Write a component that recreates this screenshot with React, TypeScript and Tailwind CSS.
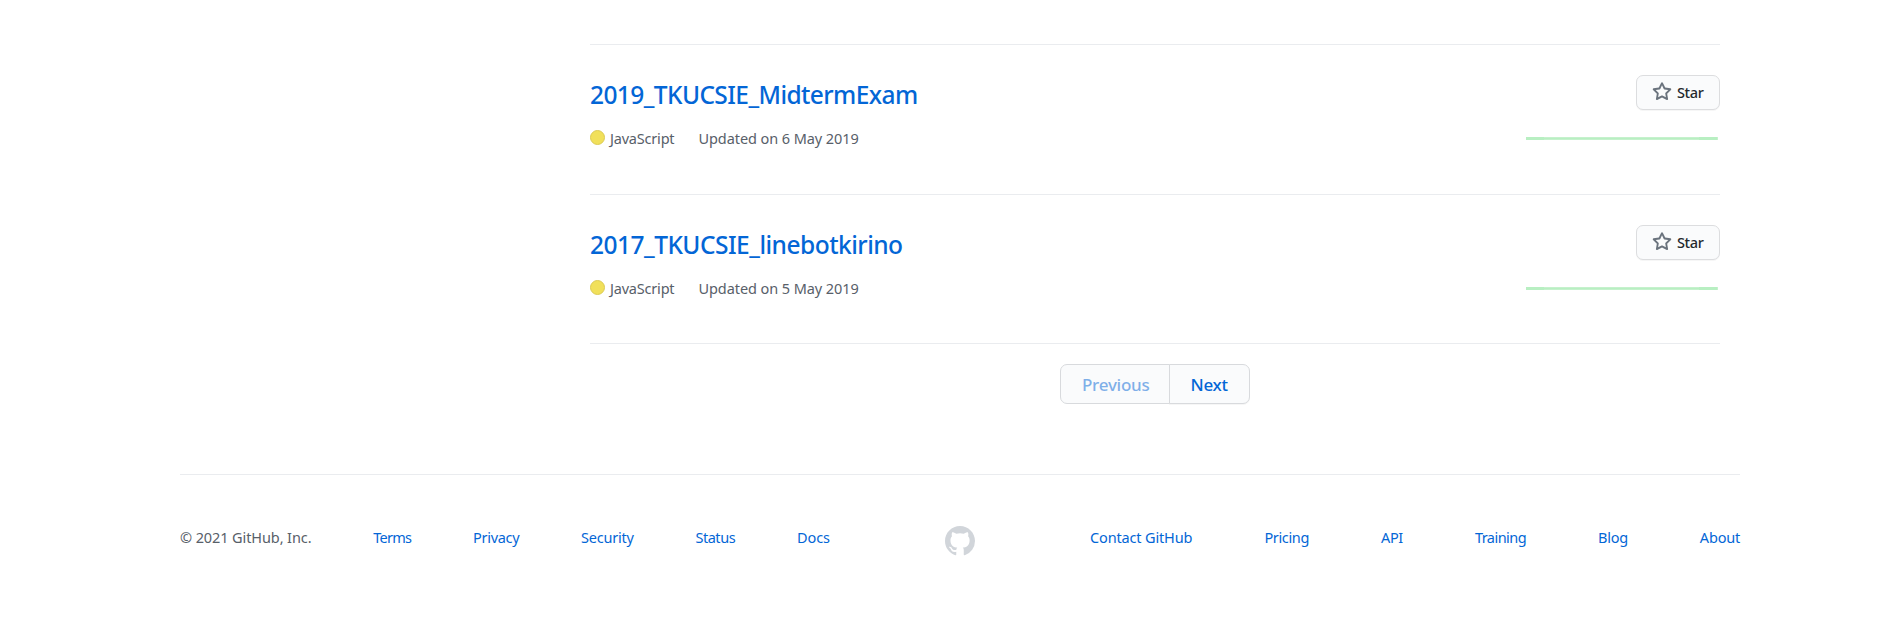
type Repo = { name: string; tracking: string; date: string; height: string };

const repos: Repo[] = [
  { name: "2019_TKUCSIE_MidtermExam", tracking: "tracking-[-0.58px]", date: "6 May 2019", height: "h-[150px]" },
  { name: "2017_TKUCSIE_linebotkirino", tracking: "tracking-[-0.51px]", date: "5 May 2019", height: "h-[149px]" },
];

const leftLinks = [
  { label: "Terms", cls: "tracking-[-0.7px]" },
  { label: "Privacy", cls: "tracking-[-0.3px]" },
  { label: "Security", cls: "tracking-[-0.22px]" },
  { label: "Status", cls: "tracking-[-0.45px]" },
  { label: "Docs", cls: "tracking-[-0.05px]" },
];

const rightLinks = [
  { label: "Contact GitHub", cls: "tracking-[-0.15px]" },
  { label: "Pricing", cls: "tracking-[-0.35px]" },
  { label: "API", cls: "tracking-[-0.4px]" },
  { label: "Training", cls: "tracking-[-0.55px]" },
  { label: "Blog", cls: "tracking-[-0.3px]" },
  { label: "About", cls: "tracking-[-0.2px]" },
];

function StarIcon() {
  return (
    <svg viewBox="0 0 16 16" className="size-5 shrink-0" fill="#6a737d">
      <path
        fillRule="evenodd"
        d="M8 .25a.75.75 0 01.673.418l1.882 3.815 4.21.612a.75.75 0 01.416 1.279l-3.046 2.97.719 4.192a.75.75 0 01-1.088.791L8 12.347l-3.766 1.98a.75.75 0 01-1.088-.79l.72-4.194L.818 6.374a.75.75 0 01.416-1.28l4.21-.611L7.327.668A.75.75 0 018 .25zm0 2.445L6.615 5.5a.75.75 0 01-.564.41l-3.097.45 2.24 2.184a.75.75 0 01.216.664l-.528 3.084 2.769-1.456a.75.75 0 01.698 0l2.77 1.456-.53-3.084a.75.75 0 01.216-.664l2.24-2.183-3.096-.45a.75.75 0 01-.564-.41L8 2.694z"
      />
    </svg>
  );
}

function MarkIcon() {
  return (
    <svg viewBox="0 0 16 16" className="size-[30px]" fill="#d1d5da">
      <path
        fillRule="evenodd"
        d="M8 0C3.58 0 0 3.58 0 8c0 3.54 2.29 6.53 5.47 7.59.4.07.55-.17.55-.38 0-.19-.01-.82-.01-1.49-2.01.37-2.53-.49-2.69-.94-.09-.23-.48-.94-.82-1.13-.28-.15-.68-.52-.01-.53.63-.01 1.08.58 1.23.82.72 1.21 1.87.87 2.33.66.07-.52.28-.87.51-1.07-1.78-.2-3.64-.89-3.64-3.95 0-.87.31-1.59.82-2.15-.08-.2-.36-1.02.08-2.12 0 0 .67-.21 2.2.82.64-.18 1.32-.27 2-.27.68 0 1.36.09 2 .27 1.53-1.04 2.2-.82 2.2-.82.44 1.1.16 1.92.08 2.12.51.56.82 1.27.82 2.15 0 3.07-1.87 3.75-3.65 3.95.29.25.54.73.54 1.48 0 1.07-.01 1.93-.01 2.2 0 .21.15.46.55.38A8.013 8.013 0 0016 8c0-4.42-3.58-8-8-8z"
      />
    </svg>
  );
}

function ActivityLine() {
  return (
    <svg viewBox="0 0 192 3" className="mr-[2px] h-[3px] w-48" shapeRendering="crispEdges">
      <rect x="0" y="0" width="192" height="3" fill="#c6f1cd" />
      <rect x="0" y="1" width="191" height="1" fill="#b8efc2" />
      <rect x="0" y="0" width="18" height="3" fill="#b8efc2" />
      <rect x="173" y="0" width="18" height="3" fill="#b8efc2" />
    </svg>
  );
}

function RepoRow({ name, tracking, date, height }: Repo) {
  return (
    <li className={`flex justify-between border-b border-[#eaecef] ${height}`}>
      <div className="pt-[34px]">
        <h3 className={`text-[24.5px] leading-[32px] font-medium text-[#0366d6] ${tracking}`}>
          <a href="#">{name}</a>
        </h3>
        <div className="mt-4 flex h-[22px] text-[14.5px] leading-[22px] text-[#586069]">
          <span className="mt-[3px] size-[15px] rounded-full border border-[#dccb54] bg-[#f1e05a]" />
          <span className="ml-[5px] w-[88.5px] tracking-[-0.2px]">JavaScript</span>
          <span className="tracking-[-0.08px]">Updated on {date}</span>
        </div>
      </div>
      <div className="flex flex-col items-end pt-[30px]">
        <button className="flex h-[35px] w-[84px] items-center rounded-[7px] border border-[#dcdddf] bg-[#fafbfc] pl-[15px] text-[14.5px] leading-none font-medium text-[#24292e] shadow-[0_1px_0_rgba(27,31,35,0.04)]">
          <span className="-mt-[2px]">
            <StarIcon />
          </span>
          <span className="ml-[5px] tracking-[-0.35px]">Star</span>
        </button>
        <div className="mt-[27px]">
          <ActivityLine />
        </div>
      </div>
    </li>
  );
}

export default function App() {
  return (
    <div className="flex h-[618px] w-[1903px] flex-col bg-white font-['Noto_Sans',sans-serif]">
      <main className="ml-[590px] w-[1130px] pt-11">
        <ul className="border-t border-[#eaecef]">
          {repos.map((repo) => (
            <RepoRow key={repo.name} {...repo} />
          ))}
        </ul>
        <nav className="mt-5 flex justify-center">
          <div className="flex h-10 w-[190px] text-[17px] leading-[38px] font-medium tracking-[-0.3px] text-[#0366d6]">
            <span className="w-[110px] rounded-l-[7px] border border-[#d8dadd] bg-[#fafbfc] pt-px pl-[21px]">
              <span className="tracking-[-0.25px] opacity-50">Previous</span>
            </span>
            <a
              href="#"
              className="-ml-px w-[81px] rounded-r-[7px] border border-[#d8dadd] bg-[#fafbfc] pt-px pl-[20.5px] shadow-[0_1px_0_rgba(27,31,35,0.04)]"
            >
              Next
            </a>
          </div>
        </nav>
      </main>
      <footer className="mt-[70px] ml-[180px] flex w-[1560px] justify-between border-t border-[#eaecef] pt-[51px] text-[14.5px] leading-[22px] text-[#0366d6]">
        <ul className="flex w-[650px] justify-between">
          <li className="tracking-[-0.1px] text-[#586069]">© 2021 GitHub, Inc.</li>
          {leftLinks.map((l) => (
            <li key={l.label} className={l.cls}>
              <a href="#">{l.label}</a>
            </li>
          ))}
        </ul>
        <a href="#" aria-label="GitHub">
          <MarkIcon />
        </a>
        <ul className="flex w-[650px] justify-between">
          {rightLinks.map((l) => (
            <li key={l.label} className={l.cls}>
              <a href="#">{l.label}</a>
            </li>
          ))}
        </ul>
      </footer>
    </div>
  );
}
